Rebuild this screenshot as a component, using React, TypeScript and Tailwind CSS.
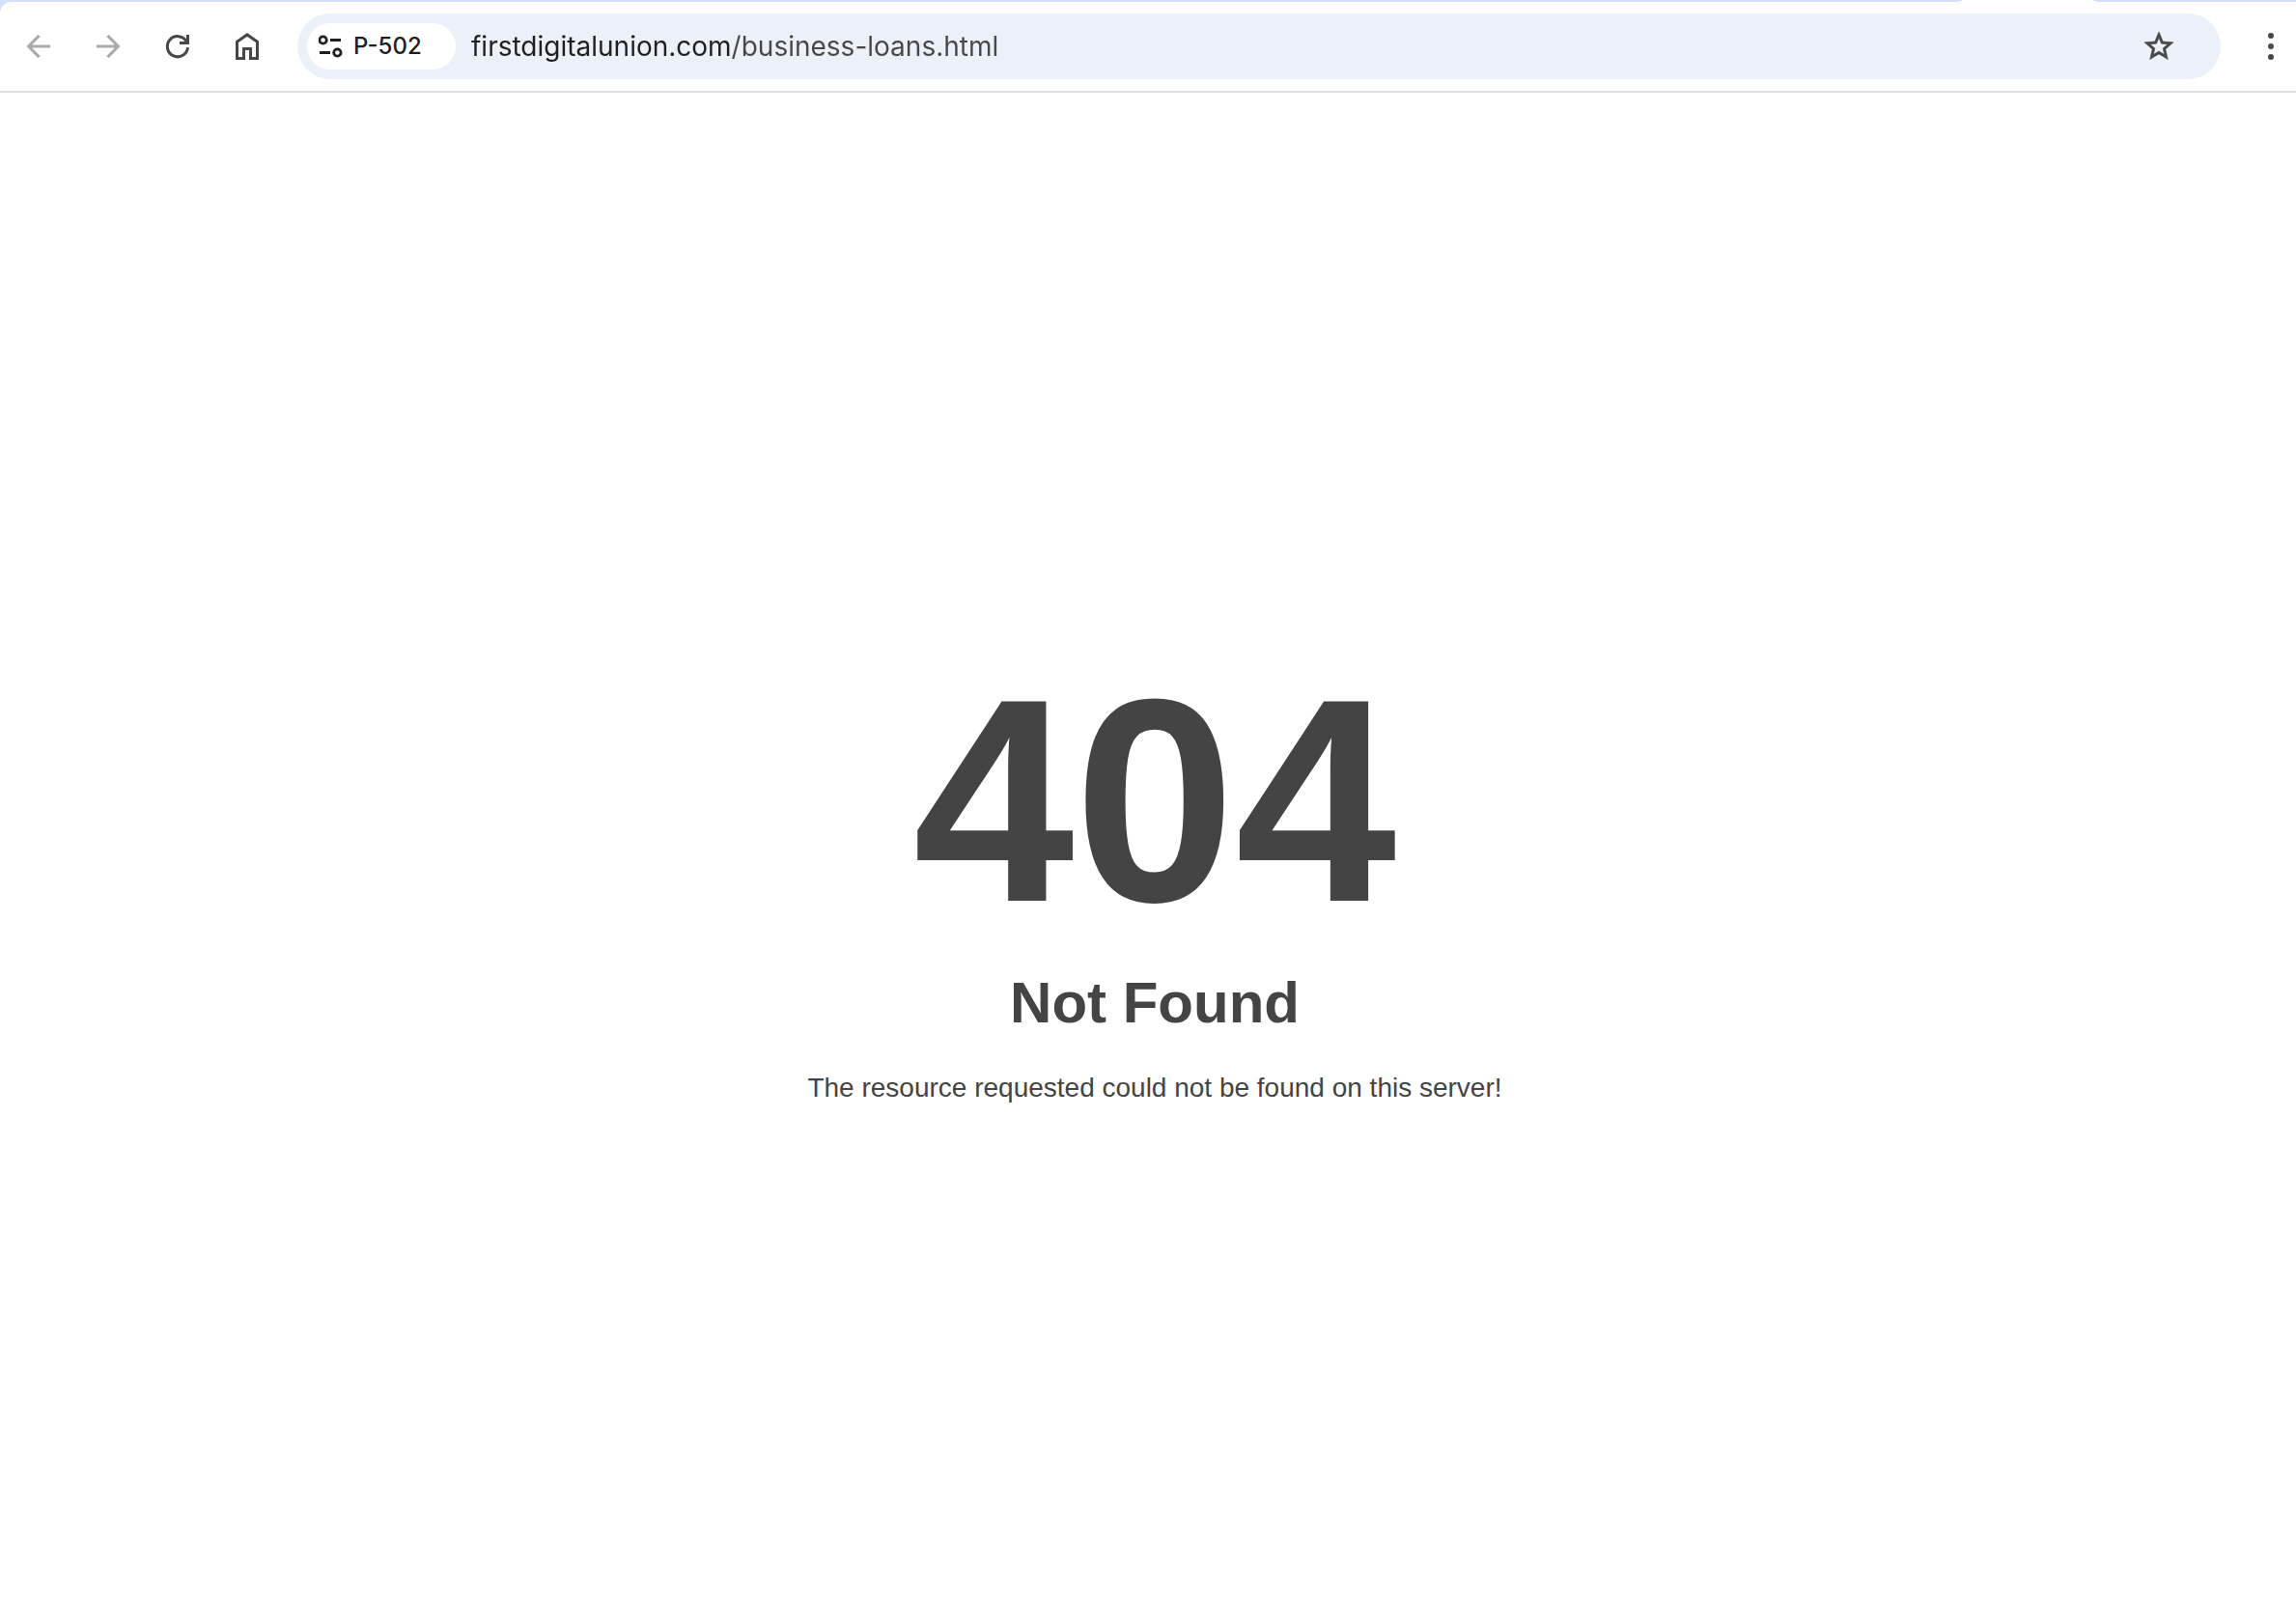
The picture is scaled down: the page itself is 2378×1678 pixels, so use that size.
import React, { type ReactNode } from "react";

function ToolbarButton({ label, children, disabled }: { label: string; children: ReactNode; disabled?: boolean }) {
  return (
    <button
      type="button"
      aria-label={label}
      disabled={disabled}
      className="flex h-[72px] w-[72px] shrink-0 items-center justify-center rounded-full text-[#474747] disabled:text-[#ababab]"
    >
      {children}
    </button>
  );
}

function Stroke({ children }: { children: ReactNode }) {
  return (
    <svg width="40" height="40" viewBox="0 0 40 40" fill="none" stroke="currentColor" strokeWidth="3" aria-hidden="true">
      {children}
    </svg>
  );
}

function TabStrip() {
  return (
    <div className="flex h-0.5 bg-[#d5e1fb]">
      <svg className="mr-[204px] ml-auto" width="150" height="2" viewBox="0 0 150 2" aria-hidden="true">
        <path d="M0 2Q6 2 9 0H143Q146 2 150 2Z" fill="#fff" />
      </svg>
    </div>
  );
}

function Toolbar() {
  return (
    <div className="bg-[#d5e1fb]">
      <div className="flex h-[94px] items-center rounded-tl-xl border-b-2 border-[#e0e0e0] bg-white pl-1">
        <ToolbarButton label="Back" disabled>
          <Stroke>
            <path d="M32 20H10M20.6 8.9L9.5 20L20.6 31.1" />
          </Stroke>
        </ToolbarButton>
        <ToolbarButton label="Forward" disabled>
          <Stroke>
            <path d="M8 20H30M19.4 8.9L30.5 20L19.4 31.1" />
          </Stroke>
        </ToolbarButton>
        <ToolbarButton label="Reload">
          <Stroke>
            <path d="M30.5 21.2A10.6 10.6 0 1 1 29 14.7M30.5 8V16.5H22" />
          </Stroke>
        </ToolbarButton>
        <ToolbarButton label="Home">
          <Stroke>
            <path d="M9.5 15.3L20 7.9L30.5 15.3V32.5H23.5V22.5H16.5V32.5H9.5Z" />
          </Stroke>
        </ToolbarButton>
        <div className="ml-4 flex h-[68px] min-w-0 flex-1 items-center rounded-full bg-[#ecf1f9] pr-7 pl-2.5">
          <button
            type="button"
            className="flex h-12 w-[154px] shrink-0 items-center gap-2.5 rounded-full bg-white pl-3 text-[24px] leading-8 font-medium text-[#1f1f1f]"
          >
            <svg width="26" height="26" viewBox="0 0 26 26" fill="none" stroke="currentColor" strokeWidth="2.8" aria-hidden="true">
              <circle cx="4.6" cy="6.5" r="3.7" />
              <path d="M12 6.5H23M1 19.5H12" />
              <circle cx="19.4" cy="19.5" r="3.7" />
            </svg>
            P-502
          </button>
          <input
            type="text"
            aria-label="Address"
            defaultValue="firstdigitalunion.com/business-loans.html"
            className="ml-4 min-w-0 flex-1 bg-[linear-gradient(90deg,#1f1f1f_269px,#474747_269px)] bg-clip-text text-[28px] leading-10 text-transparent outline-none"
          />
          <ToolbarButton label="Bookmark this page">
            <svg
              width="36"
              height="36"
              viewBox="0 0 24 24"
              fill="currentColor"
              stroke="currentColor"
              strokeWidth="0.4"
              aria-hidden="true"
            >
              <path d="M22 9.24l-7.19-.62L12 2 9.19 8.63 2 9.24l5.46 4.73L5.82 21 12 17.27 18.18 21l-1.63-7.03L22 9.24zM12 15.4l-3.76 2.27 1-4.28-3.32-2.88 4.38-.38L12 6.1l1.71 4.04 4.38.38-3.32 2.88 1 4.28L12 15.4z" />
            </svg>
          </ToolbarButton>
        </div>
        <button
          type="button"
          aria-label="Menu"
          className="ml-[26px] flex h-[72px] w-[52px] shrink-0 items-center justify-center text-[#474747]"
        >
          <svg width="8" height="30" viewBox="0 0 8 30" fill="currentColor" aria-hidden="true">
            <circle cx="4" cy="4" r="3" />
            <circle cx="4" cy="15" r="3" />
            <circle cx="4" cy="26" r="3" />
          </svg>
        </button>
      </div>
    </div>
  );
}

export default function App() {
  return (
    <div className="min-h-screen bg-white font-['Inter',sans-serif]">
      <header>
        <TabStrip />
        <Toolbar />
      </header>
      <main className="pt-[583px] pl-3.5 text-center font-['Liberation_Sans',Arial,sans-serif] text-[28px] leading-10 text-[#444]">
        <h1 className="text-[300px] leading-[300px] font-bold">404</h1>
        <h2 className="mt-10 text-[60px] leading-10 font-bold">Not Found</h2>
        <p className="mt-12">The resource requested could not be found on this server!</p>
      </main>
    </div>
  );
}
